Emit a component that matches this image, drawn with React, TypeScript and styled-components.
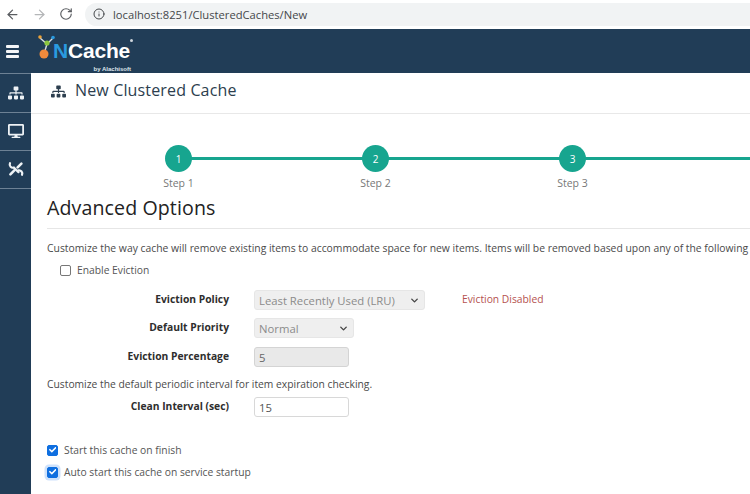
import styled, { createGlobalStyle } from "styled-components";
import { ArrowLeft, ArrowRight, RotateCw, Info, ChevronDown } from "lucide-react";
import { FaSitemap, FaDesktop, FaCheck } from "react-icons/fa";

const GlobalStyle = createGlobalStyle`
  html, body {
    margin: 0;
    width: 750px;
    height: 494px;
    overflow: hidden;
    background: #fff;
    font-family: "Open Sans", "Noto Sans", sans-serif;
  }
  * { box-sizing: border-box; }
`;

const Page = styled.div`
  width: 750px;
  height: 494px;
  display: flex;
  flex-direction: column;
  overflow: hidden;
`;

const BrowserBar = styled.div`
  height: 29px;
  flex: none;
  display: flex;
  align-items: center;
  gap: 12px;
  padding: 0 0 1px 5px;
  color: #5a5d61;
`;

const UrlPill = styled.div`
  flex: 1;
  height: 23px;
  padding-left: 8px;
  display: flex;
  align-items: center;
  gap: 8px;
  background: #f1f3f4;
  border-radius: 12px 0 0 12px;
  font-size: 11.2px;
  color: #44474a;
`;

const TopBar = styled.header`
  height: 44px;
  flex: none;
  display: flex;
  align-items: center;
  gap: 19px;
  padding-left: 6px;
  background: #213d57;
`;

const Burger = styled.div`
  width: 13px;
  height: 13px;
  display: flex;
  flex-direction: column;
  justify-content: space-between;
  & span {
    height: 3px;
    background: #f4f6f8;
    border-radius: 1px;
  }
`;

const Logo = styled.div`
  position: relative;
  width: 95px;
  height: 40px;
  color: #fff;
`;

const LogoMark = styled.svg`
  position: absolute;
  left: 0;
  top: 3px;
`;

const LogoWord = styled.div`
  position: absolute;
  left: 15px;
  top: 7px;
  font-family: "Liberation Sans", Arial, sans-serif;
  font-weight: 700;
  font-size: 21px;
  line-height: 26px;
  letter-spacing: -0.2px;
  & b { color: #2a9be0; }
`;

const LogoReg = styled.span`
  position: absolute;
  right: 0;
  top: 8px;
  width: 3px;
  height: 3px;
  border-radius: 50%;
  background: #cfd6dc;
`;

const LogoSub = styled.div`
  position: absolute;
  right: 2px;
  bottom: -1px;
  font-family: "Liberation Sans", Arial, sans-serif;
  font-size: 6px;
  font-weight: 700;
  color: #dfe6ec;
`;

const Body = styled.div`
  flex: 1;
  display: flex;
  min-height: 0;
`;

const Side = styled.nav`
  width: 31px;
  flex: none;
  display: flex;
  flex-direction: column;
  background: #213d57;
`;

const SideItem = styled.div`
  height: 38.5px;
  display: flex;
  align-items: center;
  justify-content: center;
  color: #eef2f5;
  font-size: 16px;
  border-top: 1px solid #6d8194;
  &:last-child { border-bottom: 1px solid #6d8194; }
`;

const Main = styled.main`
  flex: 1;
  min-width: 0;
  overflow: hidden;
`;

const PageHead = styled.div`
  height: 41px;
  display: flex;
  align-items: center;
  gap: 9px;
  padding: 0 0 6px 20px;
  border-bottom: 1px solid #e8e8e8;
  color: #2c3e4e;
  font-size: 16px;
  letter-spacing: 0.15px;
  & svg { font-size: 15px; margin-top: 2px; }
`;

const Content = styled.div`
  width: 760px;
  padding-left: 16px;
`;

const Stepper = styled.div`
  display: flex;
  padding: 31px 0 0 33px;
  height: 80px;
`;

const Step = styled.div`
  position: relative;
  width: 197px;
  flex: none;
  display: flex;
  flex-direction: column;
  align-items: center;
  gap: 4px;
  font-size: 10.5px;
  color: #777;
  &::after {
    content: "";
    position: absolute;
    left: 50%;
    width: 100%;
    top: 12px;
    height: 3px;
    background: #17a58f;
  }
`;

const StepDot = styled.div`
  position: relative;
  z-index: 1;
  width: 27px;
  height: 27px;
  border-radius: 50%;
  background: #17a58f;
  color: #fff;
  font-size: 10px;
  font-weight: 400;
  display: flex;
  align-items: center;
  justify-content: center;
`;

const Title = styled.h2`
  margin: 0;
  font-size: 19.6px;
  font-weight: 400;
  line-height: 28px;
  height: 35px;
  color: #222;
  border-bottom: 1px solid #e6e6e6;
  letter-spacing: 0.1px;
`;

const Note = styled.p<{ $gap?: number }>`
  margin: ${(p) => p.$gap ?? 0}px 0 0;
  font-size: 10.3px;
  line-height: 14px;
  color: #4a4a4a;
  white-space: nowrap;
`;

const Intro = styled(Note)`
  margin-top: 12px;
  font-size: 10.36px;
`;

const CheckRow = styled.label<{ $indent?: number; $gap?: number }>`
  display: flex;
  align-items: center;
  gap: 6px;
  height: 18px;
  margin-left: ${(p) => p.$indent ?? 0}px;
  margin-top: ${(p) => p.$gap ?? 0}px;
  font-size: 10.3px;
  color: #555;
`;

const Box = styled.span<{ $on?: boolean; $focus?: boolean }>`
  width: 11px;
  height: 11px;
  flex: none;
  border-radius: 2px;
  display: flex;
  align-items: center;
  justify-content: center;
  font-size: 7.5px;
  color: #fff;
  background: ${(p) => (p.$on ? "#0f6fe0" : "#fff")};
  border: 1px solid ${(p) => (p.$on ? "#0f6fe0" : "#777")};
  box-shadow: ${(p) => (p.$focus ? "0 0 0 2.5px #cfe2fb" : "none")};
`;

const FormRow = styled.div<{ $gap?: number }>`
  display: flex;
  align-items: center;
  height: 20px;
  margin-top: ${(p) => p.$gap ?? 0}px;
`;

const Label = styled.div`
  width: 182px;
  flex: none;
  text-align: right;
  font-size: 10.3px;
  font-weight: 700;
  color: #2e2e2e;
  margin-right: 25px;
  padding-bottom: 3px;
`;

const Field = styled.div<{ $w: number; $off?: boolean }>`
  width: ${(p) => p.$w}px;
  height: 20px;
  flex: none;
  display: flex;
  align-items: center;
  justify-content: space-between;
  padding: 0 4px;
  border-radius: 3px;
  font-size: 11.3px;
  color: ${(p) => (p.$off ? "#8b8b8b" : "#555")};
  background: ${(p) => (p.$off ? "#efefef" : "#fff")};
  border: 1px solid ${(p) => (p.$off ? "#e6e6e6" : "#d8d8d8")};
`;

const ReadOnly = styled(Field)`
  background: #e9e9e9;
  border-color: #d4d4d4;
  color: #666;
`;

const Warn = styled.span`
  margin-left: 37px;
  font-size: 10.3px;
  color: #b5524f;
  padding-bottom: 3px;
`;

const WrenchIcon = () => (
  <svg width="18" height="18" viewBox="0 0 18 18" fill="none" stroke="currentColor" strokeLinecap="round">
    <path d="M3 3.2 a3.2 3.2 0 0 0 3.8 4.4 L11.5 12.2" strokeWidth="2.2" />
    <path d="M15 14.8 a3.2 3.2 0 0 0 -3.6 -4.4" strokeWidth="2.2" />
    <path d="M3.4 14.4 L7.6 10.2" strokeWidth="2.6" />
    <path d="M10.6 7.4 L14.4 3.6" strokeWidth="2.6" />
  </svg>
);

export default function App() {
  return (
    <Page>
      <GlobalStyle />
      <BrowserBar>
        <ArrowLeft size={15} />
        <ArrowRight size={15} color="#b4b6b8" />
        <RotateCw size={14} />
        <UrlPill>
          <Info size={12} />
          <span>localhost:8251/ClusteredCaches/New</span>
        </UrlPill>
      </BrowserBar>
      <TopBar>
        <Burger>
          <span />
          <span />
          <span />
        </Burger>
        <Logo>
          <LogoMark width="18" height="30" viewBox="0 0 18 30">
            <path d="M2 4 L9 10 L15 4 M9 10 L6 20" stroke="#d8dde0" strokeWidth="1.4" fill="none" />
            <circle cx="2" cy="3" r="1.8" fill="#e9a23a" />
            <circle cx="9" cy="9" r="2.6" fill="#8cc63f" />
            <circle cx="15" cy="3.5" r="1.8" fill="#2a9be0" />
            <circle cx="6" cy="20" r="4.5" fill="#f08a3c" />
          </LogoMark>
          <LogoWord>
            <b>N</b>Cache
          </LogoWord>
          <LogoReg />
          <LogoSub>by Alachisoft</LogoSub>
        </Logo>
      </TopBar>
      <Body>
        <Side>
          <SideItem>
            <FaSitemap />
          </SideItem>
          <SideItem>
            <FaDesktop />
          </SideItem>
          <SideItem>
            <WrenchIcon />
          </SideItem>
        </Side>
        <Main>
          <PageHead>
            <FaSitemap />
            New Clustered Cache
          </PageHead>
          <Content>
            <Stepper>
              <Step>
                <StepDot>1</StepDot>
                Step 1
              </Step>
              <Step>
                <StepDot>2</StepDot>
                Step 2
              </Step>
              <Step>
                <StepDot>3</StepDot>
                Step 3
              </Step>
            </Stepper>
            <Title>Advanced Options</Title>
            <Intro>
              Customize the way cache will remove existing items to accommodate space for new items. Items will be
              removed based upon any of the following
            </Intro>
            <CheckRow $indent={13} $gap={6}>
              <Box />
              Enable Eviction
            </CheckRow>
            <FormRow $gap={11}>
              <Label>Eviction Policy</Label>
              <Field $w={171} $off>
                Least Recently Used (LRU)
                <ChevronDown size={11} color="#444" strokeWidth={3} />
              </Field>
              <Warn>Eviction Disabled</Warn>
            </FormRow>
            <FormRow $gap={8}>
              <Label>Default Priority</Label>
              <Field $w={100} $off>
                Normal
                <ChevronDown size={11} color="#444" strokeWidth={3} />
              </Field>
            </FormRow>
            <FormRow $gap={9}>
              <Label>Eviction Percentage</Label>
              <ReadOnly $w={95}>5</ReadOnly>
            </FormRow>
            <Note $gap={10}>Customize the default periodic interval for item expiration checking.</Note>
            <FormRow $gap={6}>
              <Label>Clean Interval (sec)</Label>
              <Field $w={95}>15</Field>
            </FormRow>
            <CheckRow $gap={24}>
              <Box $on>
                <FaCheck />
              </Box>
              Start this cache on finish
            </CheckRow>
            <CheckRow $gap={4}>
              <Box $on $focus>
                <FaCheck />
              </Box>
              Auto start this cache on service startup
            </CheckRow>
          </Content>
        </Main>
      </Body>
    </Page>
  );
}
